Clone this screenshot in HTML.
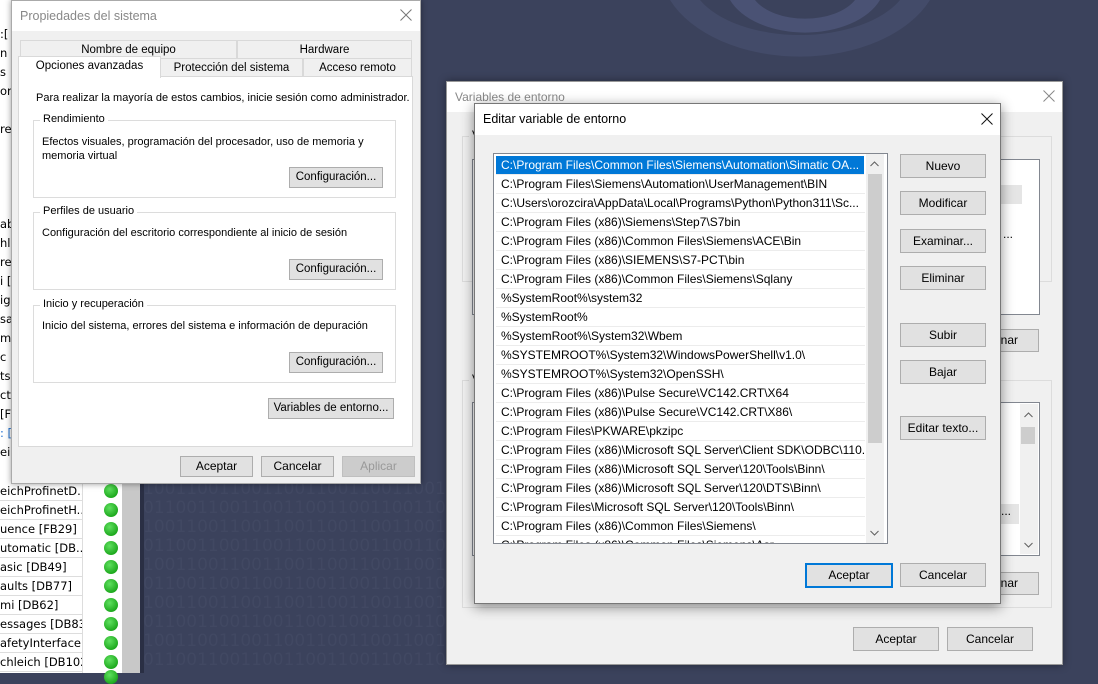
<!DOCTYPE html>
<html><head><meta charset="utf-8"><style>
*{box-sizing:border-box;margin:0;padding:0}
body{width:1098px;height:673px;overflow:hidden;background:#3b425c;font-family:"Liberation Sans",sans-serif;font-size:12px;color:#000;position:relative}
.abs{position:absolute}
.btn{position:absolute;background:#e1e1e1;border:1px solid #adadad;text-align:center;line-height:19px;font-size:12px}
.row{position:absolute;left:0;width:82px;height:19px;border-bottom:1px solid #ddd;background:#fff;font-family:"DejaVu Sans",sans-serif;font-size:11.5px;line-height:18px;white-space:nowrap;overflow:hidden}
.dot{position:absolute;left:104px;width:14px;height:14px;border-radius:50%;background:radial-gradient(circle at 40% 35%,#5fe05f,#1faa1f 70%)}
.grp{position:absolute;border:1px solid #dcdcdc}
.grp .lg{position:absolute;top:-8px;left:6px;background:#f0f0f0;padding:0 3px;font-size:11px}
.li{position:absolute;left:2px;width:369px;height:19px;border-bottom:1px solid #ececec;padding-left:5px;line-height:18px;font-size:12px;white-space:nowrap;overflow:hidden;font-family:"Liberation Sans Narrow","Liberation Sans",sans-serif}
</style></head><body>
<div class="abs" style="left:143px;top:480px;width:310px;height:193px;color:#414862;font-size:17px;line-height:19px;overflow:hidden;font-family:'DejaVu Sans'">10011001100110011001100110011001<br>01100110011001100110011001100110<br>10011001100110011001100110011001<br>01100110011001100110011001100110<br>10011001100110011001100110011001<br>01100110011001100110011001100110<br>10011001100110011001100110011001<br>01100110011001100110011001100110<br>10011001100110011001100110011001<br>01100110011001100110011001100110</div>
<svg class="abs" style="left:640px;top:0" width="330" height="80" viewBox="0 0 330 80">
 <path d="M30 0 A140 90 0 0 0 290 0 L260 0 A110 60 0 0 1 60 0 Z" fill="#434b69"/>
 <path d="M90 0 A80 50 0 0 0 240 0 L215 0 A55 32 0 0 1 115 0 Z" fill="#4a5274"/>
</svg>
<div class="abs" style="left:0;top:0;width:140px;height:673px;background:#fff"></div>
<div class="abs" style="left:122px;top:0;width:18px;height:673px;background:#c8c8c8"></div>
<div class="abs" style="left:140px;top:0;width:4px;height:673px;background:#2a2f44"></div>
<div class="abs" style="left:82px;top:0;width:1px;height:673px;background:#ddd"></div>
<div class="row" style="top:482px">eichProfinetD...</div>
<div class="row" style="top:501px">eichProfinetH...</div>
<div class="row" style="top:520px">uence [FB29]</div>
<div class="row" style="top:539px">utomatic [DB...</div>
<div class="row" style="top:558px">asic [DB49]</div>
<div class="row" style="top:577px">aults [DB77]</div>
<div class="row" style="top:596px">mi [DB62]</div>
<div class="row" style="top:615px">essages [DB83]</div>
<div class="row" style="top:634px">afetyInterface ...</div>
<div class="row" style="top:653px">chleich [DB102]</div>
<div class="dot" style="top:484px"></div><div class="dot" style="top:503px"></div><div class="dot" style="top:522px"></div><div class="dot" style="top:541px"></div><div class="dot" style="top:560px"></div><div class="dot" style="top:579px"></div><div class="dot" style="top:598px"></div><div class="dot" style="top:617px"></div><div class="dot" style="top:636px"></div><div class="dot" style="top:655px"></div><div class="dot" style="top:670px"></div>
<div class="abs" style="left:0;top:25px;width:11px;height:440px;font-family:'DejaVu Sans';font-size:11.5px;line-height:19px;overflow:hidden;white-space:nowrap">:[<br>n<br>s<br>on<br><br>re<br><br><br><br><br>ab<br>hlc<br>reS<br>i [<br>ig<br>sa<br>m<br>c [<br>ts<br>cti<br>[F<br><span style="color:#1d6fd0">: [</span><br>ei<br>ei</div>

<!-- Dialog 1 -->
<div class="abs" style="left:11px;top:0;width:410px;height:484px;background:#f0f0f0;border:1px solid #aaa;box-shadow:0 0 6px rgba(0,0,0,.4)">
 <div class="abs" style="left:0;top:0;width:408px;height:30px;background:#fff"></div>
 <div class="abs" style="left:8px;top:8px;color:#888;font-size:12.5px">Propiedades del sistema</div>
 <svg class="abs" style="left:388px;top:8px" width="12" height="12"><path d="M0.5 0.5L11.5 11.5M11.5 0.5L0.5 11.5" stroke="#777" stroke-width="1"/></svg>
 <div class="abs" style="left:8px;top:39px;width:217px;height:19px;border:1px solid #d9d9d9;background:#f0f0f0;text-align:center;line-height:18px;font-size:11.5px">Nombre de equipo</div>
 <div class="abs" style="left:225px;top:39px;width:175px;height:19px;border:1px solid #d9d9d9;background:#f0f0f0;text-align:center;line-height:18px;font-size:11.5px">Hardware</div>
 <div class="abs" style="left:148px;top:57px;width:143px;height:19px;border:1px solid #d9d9d9;text-align:center;line-height:18px;font-size:11.5px">Protección del sistema</div>
 <div class="abs" style="left:291px;top:57px;width:109px;height:19px;border:1px solid #d9d9d9;text-align:center;line-height:18px;font-size:11.5px">Acceso remoto</div>
 <div class="abs" style="left:6px;top:75px;width:395px;height:371px;background:#fff;border:1px solid #d9d9d9"></div>
 <div class="abs" style="left:6px;top:55px;width:143px;height:22px;background:#fff;border:1px solid #d9d9d9;border-bottom:none;text-align:center;line-height:18px;font-size:11.5px">Opciones avanzadas</div>
 <div class="abs" style="left:24px;top:91px;font-size:11px">Para realizar la mayoría de estos cambios, inicie sesión como administrador.</div>
 <div class="grp" style="left:21px;top:119px;width:363px;height:78px;background:#fff"><span class="lg" style="background:#fff">Rendimiento</span>
  <div class="abs" style="left:8px;top:14px;font-size:11px;line-height:14px">Efectos visuales, programación del procesador, uso de memoria y<br>memoria virtual</div></div>
 <div class="btn" style="left:277px;top:166px;width:94px;height:21px;font-size:11.5px">Configuración...</div>
 <div class="grp" style="left:21px;top:211px;width:363px;height:78px;background:#fff"><span class="lg" style="background:#fff">Perfiles de usuario</span>
  <div class="abs" style="left:8px;top:14px;font-size:11px">Configuración del escritorio correspondiente al inicio de sesión</div></div>
 <div class="btn" style="left:277px;top:258px;width:94px;height:21px;font-size:11.5px">Configuración...</div>
 <div class="grp" style="left:21px;top:304px;width:363px;height:78px;background:#fff"><span class="lg" style="background:#fff">Inicio y recuperación</span>
  <div class="abs" style="left:8px;top:14px;font-size:11px">Inicio del sistema, errores del sistema e información de depuración</div></div>
 <div class="btn" style="left:277px;top:351px;width:94px;height:21px;font-size:11.5px">Configuración...</div>
 <div class="btn" style="left:256px;top:397px;width:126px;height:21px;font-size:11.5px">Variables de entorno...</div>
 <div class="btn" style="left:168px;top:455px;width:73px;height:21px">Aceptar</div>
 <div class="btn" style="left:249px;top:455px;width:73px;height:21px">Cancelar</div>
 <div class="btn" style="left:330px;top:455px;width:73px;height:21px;color:#999;background:#ccc;border-color:#bfbfbf">Aplicar</div>
</div>

<!-- Dialog 2 -->
<div class="abs" style="left:446px;top:81px;width:617px;height:584px;background:#f0f0f0;border:1px solid #999;box-shadow:0 0 8px rgba(0,0,0,.4)">
 <div class="abs" style="left:0;top:0;width:615px;height:30px;background:#fff"></div>
 <div class="abs" style="left:8px;top:8px;color:#888;font-size:12px">Variables de entorno</div>
 <svg class="abs" style="left:596px;top:8px" width="12" height="12"><path d="M0.5 0.5L11.5 11.5M11.5 0.5L0.5 11.5" stroke="#888" stroke-width="1"/></svg>
 <div class="grp" style="left:15px;top:54px;width:590px;height:146px"><span class="lg">V</span></div>
 <div class="abs" style="left:25px;top:77px;width:568px;height:156px;background:#fff;border:1px solid #828790"></div>
 <div class="abs" style="left:549px;top:103px;width:26px;height:19px;background:#e5e5e5"></div>
 <div class="abs" style="left:556px;top:145px;font-size:12px">...</div>
 <div class="btn" style="left:530px;top:247px;width:62px;height:23px;line-height:21px;text-align:right;padding-right:20px">nar</div>
 <div class="grp" style="left:15px;top:298px;width:590px;height:228px"><span class="lg">V</span></div>
 <div class="abs" style="left:25px;top:320px;width:568px;height:154px;background:#fff;border:1px solid #828790"></div>
 <div class="abs" style="left:573px;top:322px;width:18px;height:150px;background:#f0f0f0"></div>
 <div class="abs" style="left:574px;top:345px;width:14px;height:17px;background:#cdcdcd"></div>
 <svg class="abs" style="left:577px;top:330px" width="9" height="6"><path d="M0.5 5L4.5 1L8.5 5" stroke="#606060" fill="none"/></svg>
 <svg class="abs" style="left:577px;top:460px" width="9" height="6"><path d="M0.5 1L4.5 5L8.5 1" stroke="#606060" fill="none"/></svg>
 <div class="abs" style="left:540px;top:422px;width:32px;height:20px;background:#e5e5e5;padding-left:14px">...</div>
 <div class="btn" style="left:530px;top:490px;width:62px;height:23px;line-height:21px;text-align:right;padding-right:20px">nar</div>
 <div class="btn" style="left:406px;top:545px;width:86px;height:24px;line-height:22px">Aceptar</div>
 <div class="btn" style="left:500px;top:545px;width:86px;height:24px;line-height:22px">Cancelar</div>
</div>

<!-- Dialog 3 -->
<div class="abs" style="left:474px;top:103px;width:527px;height:501px;background:#f0f0f0;border:1px solid #777;box-shadow:0 3px 12px rgba(0,0,0,.45)">
 <div class="abs" style="left:0;top:0;width:525px;height:31px;background:#fff"></div>
 <div class="abs" style="left:8px;top:8px;font-size:12.5px">Editar variable de entorno</div>
 <svg class="abs" style="left:506px;top:9px" width="12" height="12"><path d="M0.5 0.5L11.5 11.5M11.5 0.5L0.5 11.5" stroke="#111" stroke-width="1"/></svg>
 <div class="abs" style="left:18px;top:49px;width:395px;height:391px;background:#fff;border:1px solid #828790;overflow:hidden">
  <div class="li" style="top:2px;width:368px;background:#0078d7;color:#fff">C:\Program Files\Common Files\Siemens\Automation\Simatic OA...</div>
  <div class="li" style="top:21px">C:\Program Files\Siemens\Automation\UserManagement\BIN</div>
  <div class="li" style="top:40px">C:\Users\orozcira\AppData\Local\Programs\Python\Python311\Sc...</div>
  <div class="li" style="top:59px">C:\Program Files (x86)\Siemens\Step7\S7bin</div>
  <div class="li" style="top:78px">C:\Program Files (x86)\Common Files\Siemens\ACE\Bin</div>
  <div class="li" style="top:97px">C:\Program Files (x86)\SIEMENS\S7-PCT\bin</div>
  <div class="li" style="top:116px">C:\Program Files (x86)\Common Files\Siemens\Sqlany</div>
  <div class="li" style="top:135px">%SystemRoot%\system32</div>
  <div class="li" style="top:154px">%SystemRoot%</div>
  <div class="li" style="top:173px">%SystemRoot%\System32\Wbem</div>
  <div class="li" style="top:192px">%SYSTEMROOT%\System32\WindowsPowerShell\v1.0\</div>
  <div class="li" style="top:211px">%SYSTEMROOT%\System32\OpenSSH\</div>
  <div class="li" style="top:230px">C:\Program Files (x86)\Pulse Secure\VC142.CRT\X64</div>
  <div class="li" style="top:249px">C:\Program Files (x86)\Pulse Secure\VC142.CRT\X86\</div>
  <div class="li" style="top:268px">C:\Program Files\PKWARE\pkzipc</div>
  <div class="li" style="top:287px">C:\Program Files (x86)\Microsoft SQL Server\Client SDK\ODBC\110...</div>
  <div class="li" style="top:306px">C:\Program Files (x86)\Microsoft SQL Server\120\Tools\Binn\</div>
  <div class="li" style="top:325px">C:\Program Files (x86)\Microsoft SQL Server\120\DTS\Binn\</div>
  <div class="li" style="top:344px">C:\Program Files\Microsoft SQL Server\120\Tools\Binn\</div>
  <div class="li" style="top:363px">C:\Program Files (x86)\Common Files\Siemens\</div>
  <div class="li" style="top:382px">C:\Program Files (x86)\Common Files\Siemens\Asr</div>
  <div class="abs" style="left:372px;top:0;width:18px;height:389px;background:#f0f0f0"></div>
  <div class="abs" style="left:374px;top:20px;width:14px;height:269px;background:#cdcdcd"></div>
  <svg class="abs" style="left:376px;top:7px" width="9" height="6"><path d="M0.5 5L4.5 1L8.5 5" stroke="#606060" fill="none"/></svg>
  <svg class="abs" style="left:376px;top:376px" width="9" height="6"><path d="M0.5 1L4.5 5L8.5 1" stroke="#606060" fill="none"/></svg>
 </div>
 <div class="btn" style="left:425px;top:50px;width:86px;height:24px;line-height:22px">Nuevo</div>
 <div class="btn" style="left:425px;top:87px;width:86px;height:24px;line-height:22px">Modificar</div>
 <div class="btn" style="left:425px;top:125px;width:86px;height:24px;line-height:22px">Examinar...</div>
 <div class="btn" style="left:425px;top:162px;width:86px;height:24px;line-height:22px">Eliminar</div>
 <div class="btn" style="left:425px;top:219px;width:86px;height:24px;line-height:22px">Subir</div>
 <div class="btn" style="left:425px;top:256px;width:86px;height:24px;line-height:22px">Bajar</div>
 <div class="btn" style="left:425px;top:312px;width:86px;height:24px;line-height:22px">Editar texto...</div>
 <div class="btn" style="left:330px;top:459px;width:88px;height:25px;line-height:21px;border:2px solid #0078d7">Aceptar</div>
 <div class="btn" style="left:425px;top:459px;width:86px;height:24px;line-height:22px">Cancelar</div>
</div>
</body></html>
